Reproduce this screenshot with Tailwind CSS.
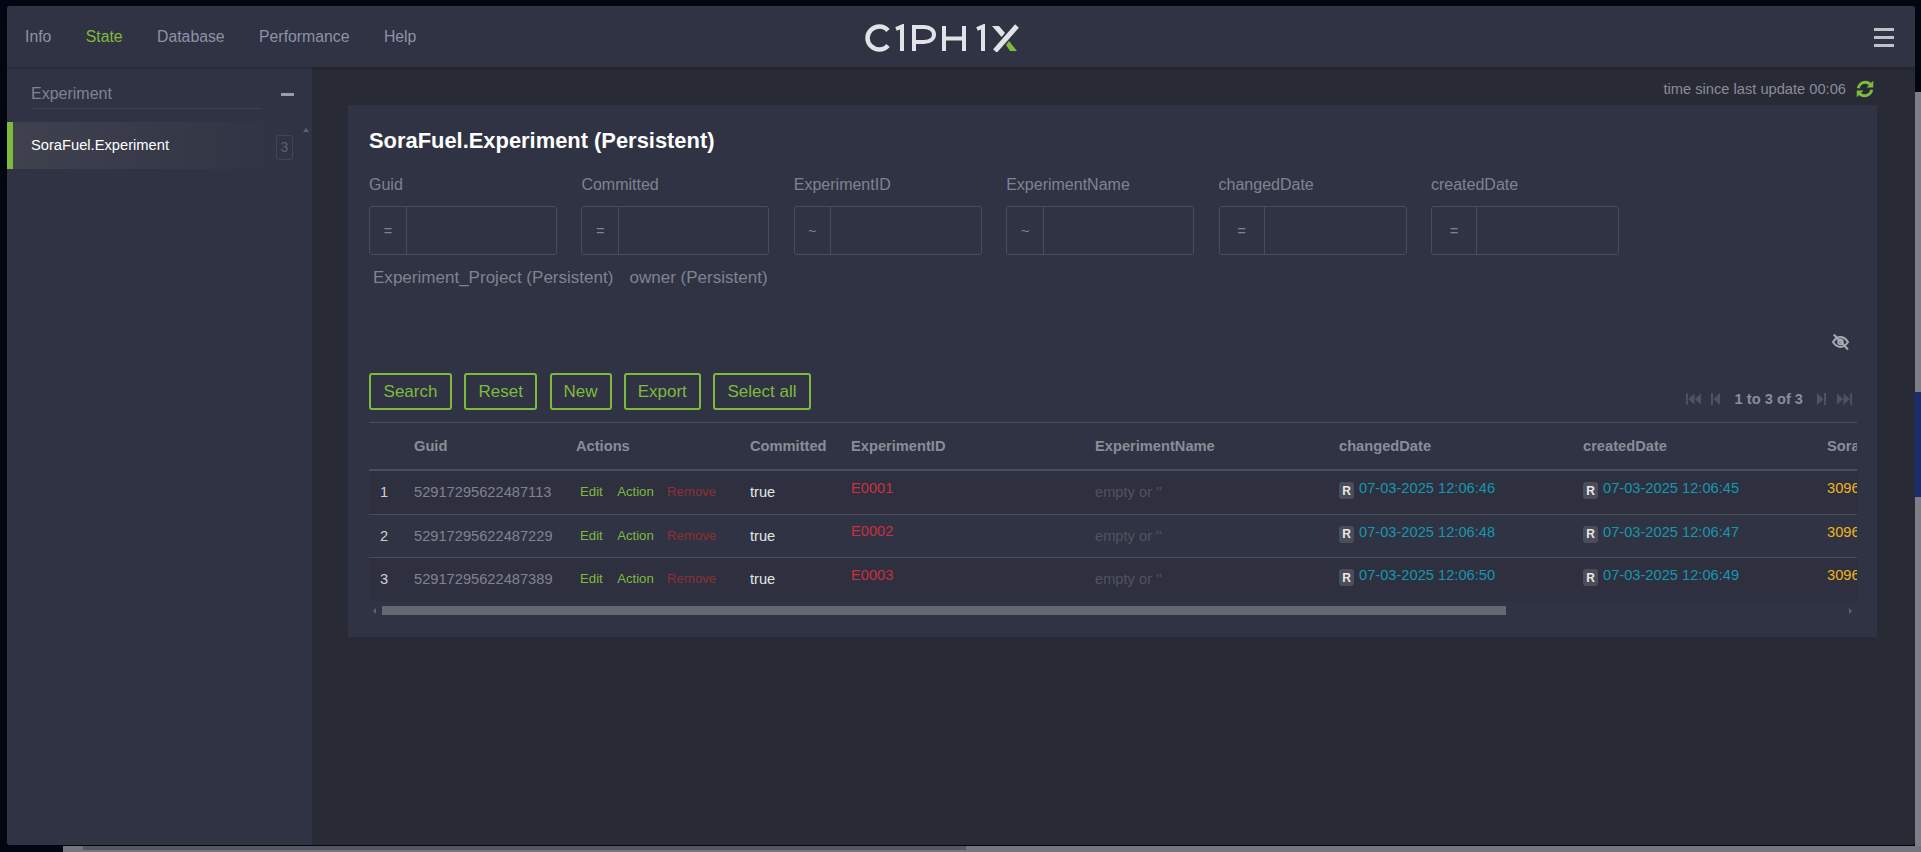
<!DOCTYPE html>
<html lang="en">
  <head>
    <meta charset="UTF-8" />
    <title>Ciphix</title>
    <script src="https://cdn.jsdelivr.net/npm/@tailwindcss/browser@4"></script>
  </head>
  <body class="bg-[#020611] font-['Liberation_Sans',Arial,sans-serif] overflow-hidden">
    <div class="w-[1921px] h-[852px] flex flex-col overflow-hidden">
      <div class="flex flex-1 min-h-0 pt-[6px] pl-[7px]">
        <!-- app window -->
        <div class="w-[1908px] h-[839px] flex flex-col rounded-[3px] overflow-hidden bg-[#282a36]">
          <header class="h-[61px] shrink-0 bg-[#303343] flex items-center relative shadow-[0_1px_3px_rgba(0,0,0,0.25)] z-10">
            <nav class="flex items-center pl-[18px] pt-[1px] gap-[34.4px] text-[15.8px] text-[#8c92a8]">
              <a>Info</a>
              <a class="text-[#7fba3c]">State</a>
              <a>Database</a>
              <a>Performance</a>
              <a>Help</a>
            </nav>
            <!-- logo -->
            <div class="absolute left-[858px] top-[18px] flex items-center">
              <svg width="155" height="28" viewBox="0 0 155 28" fill="none">
                <path d="M23 6.500 C20.500 3.500 17.500 2.500 14.500 2.500 C8 2.500 2.500 7.500 2.500 14 C2.500 20.500 8 25.500 14.500 25.500 C17.500 25.500 20.500 24.500 23 21.500" stroke="#e2e3e6" stroke-width="4.500"/>
                <path d="M31 5 L37 2.500 L37 27" stroke="#e2e3e6" stroke-width="4"/>
                <path d="M49 27 L49 3 L59 3 C65.500 3 69 6.500 69 10.500 C69 14.500 65.500 18 59 18 L49 18" stroke="#e2e3e6" stroke-width="4"/>
                <path d="M79 2 L79 27 M99 2 L99 27 M79 14.500 L99 14.500" stroke="#e2e3e6" stroke-width="4"/>
                <path d="M112 5 L118 2.500 L118 27" stroke="#e2e3e6" stroke-width="4"/>
                <path d="M130 27 L152 2" stroke="#e2e3e6" stroke-width="5"/>
                <path d="M127 2 L134 2 L140 9 L136.500 13 Z" fill="#e2e3e6"/>
                <path d="M144 17 L152 27 L145 27 L141 21 Z" fill="#7fba3c"/>
              </svg>
            </div>
            <div class="absolute right-[21px] top-[22px] w-[20px] flex flex-col gap-[5.5px]">
              <span class="h-[2.5px] bg-[#c0c1c8]"></span>
              <span class="h-[2.5px] bg-[#c0c1c8]"></span>
              <span class="h-[2.5px] bg-[#c0c1c8]"></span>
            </div>
          </header>
          <div class="flex flex-1 min-h-0">
            <aside class="w-[305px] shrink-0 bg-[#303343] relative">
              <div class="h-[41px] mt-[1px] ml-[24px] w-[231px] pb-[2px] border-b border-[#3d4050] flex items-end text-[16px] text-[#7f8391]">Experiment</div>
              <div class="absolute left-[274px] top-[26px] w-[13px] h-[3px] bg-[#9b9ea8]"></div>
              <div class="mt-[13px] h-[47px] w-[280px] flex items-center border-l-[6px] border-[#7fba3c] bg-gradient-to-r from-[#3f414f] to-[#303343]">
                <span class="pl-[18px] text-[14.7px] text-white">SoraFuel.Experiment</span>
              </div>
              <div class="absolute left-[269px] top-[68px] w-[17px] h-[25px] rounded-[3px] border border-[#424554] flex items-center justify-center text-[14px] text-[#5d606d]">3</div>
              <div class="absolute left-[296px] top-[61px] w-0 h-0 border-x-[3px] border-x-transparent border-b-[4px] border-b-[#5f6270]"></div>
            </aside>
            <main class="flex-1 min-w-0 flex flex-col pl-[36px] pr-[38px]">
              <div class="h-[38px] pt-[5px] flex items-center justify-end gap-[10px] pr-[3px] text-[14.67px] text-[#8a8d98]">
                <span>time since last update 00:06</span>
                <svg width="18" height="18" viewBox="0 0 24 24" fill="none" stroke="#7fba3c" stroke-width="4">
                  <path d="M3 11 C4 6 8 3 12.500 3 C16 3 18.500 4.500 20.500 7.500"/>
                  <path d="M23 1 L23 10 L14 10 Z" fill="#7fba3c" stroke="none"/>
                  <path d="M21 13 C20 18 16 21 11.500 21 C8 21 5.500 19.500 3.500 16.500"/>
                  <path d="M1 23 L1 14 L10 14 Z" fill="#7fba3c" stroke="none"/>
                </svg>
              </div>
              <!-- card -->
              <section class="h-[532px] w-[1529px] bg-[#303343] px-[21px] pt-[24px]">
                <h1 class="text-[21.9px] leading-[24px] font-bold text-white">SoraFuel.Experiment (Persistent)</h1>
                <div class="flex gap-[24.4px] mt-[20px]">
                  <label class="w-[188px] text-[16px] text-[#7f8391]">Guid
                    <div class="mt-[9px] h-[49px] flex rounded-[3px] border border-[#494c5b]"><span class="w-[37px] border-r border-[#494c5b] flex items-center justify-center text-[14.67px] text-[#7f8391]">=</span></div>
                  </label>
                  <label class="w-[188px] text-[16px] text-[#7f8391]">Committed
                    <div class="mt-[9px] h-[49px] flex rounded-[3px] border border-[#494c5b]"><span class="w-[37px] border-r border-[#494c5b] flex items-center justify-center text-[14.67px] text-[#7f8391]">=</span></div>
                  </label>
                  <label class="w-[188px] text-[16px] text-[#7f8391]">ExperimentID
                    <div class="mt-[9px] h-[49px] flex rounded-[3px] border border-[#494c5b]"><span class="w-[36px] border-r border-[#494c5b] flex items-center justify-center text-[14.67px] text-[#7f8391]">~</span></div>
                  </label>
                  <label class="w-[188px] text-[16px] text-[#7f8391]">ExperimentName
                    <div class="mt-[9px] h-[49px] flex rounded-[3px] border border-[#494c5b]"><span class="w-[37px] border-r border-[#494c5b] flex items-center justify-center text-[14.67px] text-[#7f8391]">~</span></div>
                  </label>
                  <label class="w-[188px] text-[16px] text-[#7f8391]">changedDate
                    <div class="mt-[9px] h-[49px] flex rounded-[3px] border border-[#494c5b]"><span class="w-[45px] border-r border-[#494c5b] flex items-center justify-center text-[14.67px] text-[#7f8391]">=</span></div>
                  </label>
                  <label class="w-[188px] text-[16px] text-[#7f8391]">createdDate
                    <div class="mt-[9px] h-[49px] flex rounded-[3px] border border-[#494c5b]"><span class="w-[45px] border-r border-[#494c5b] flex items-center justify-center text-[14.67px] text-[#7f8391]">=</span></div>
                  </label>
                </div>
                <div class="flex gap-[16px] pl-[4px] mt-[13px] text-[17.05px] leading-[20px] text-[#7f8391]">
                  <span>Experiment_Project (Persistent)</span>
                  <span>owner (Persistent)</span>
                </div>
                <div class="flex justify-end pr-[6px] mt-[45px] h-[20px]">
                  <svg width="19" height="18" viewBox="0 0 24 24" fill="none" stroke="#a5a8b2" stroke-width="2.800">
                    <path d="M2 12 C5 7.500 8.500 5.500 12 5.500 C15.500 5.500 19 7.500 22 12 C19 16.500 15.500 18.500 12 18.500 C8.500 18.500 5 16.500 2 12 Z"/>
                    <circle cx="12" cy="12" r="3"/>
                    <path d="M3 2 L22 22"/>
                  </svg>
                </div>
                <div class="flex items-start mt-[20px] h-[37px]">
                  <div class="flex gap-[12.25px] text-[17px] text-[#7fba3c]">
                    <button class="h-[37px] w-[83px] border-2 border-[#7fba3c] rounded-[3px]">Search</button>
                    <button class="h-[37px] w-[73px] border-2 border-[#7fba3c] rounded-[3px]">Reset</button>
                    <button class="h-[37px] w-[62px] border-2 border-[#7fba3c] rounded-[3px]">New</button>
                    <button class="h-[37px] w-[77px] border-2 border-[#7fba3c] rounded-[3px]">Export</button>
                    <button class="h-[37px] w-[98px] border-2 border-[#7fba3c] rounded-[3px]">Select all</button>
                  </div>
                  <div class="ml-auto flex items-center h-[37px] pt-[14px] pr-[4px] text-[#50535f]">
                    <svg width="15" height="12" viewBox="0 0 16 12" fill="currentColor"><path d="M0 0h2v12H0z M9 0v12L2.500 6z M16 0v12L9.500 6z"/></svg>
                    <svg class="ml-[10px]" width="9" height="12" viewBox="0 0 9 12" fill="currentColor"><path d="M0 0h2v12H0z M9 0v12L2.500 6z"/></svg>
                    <span class="ml-[15px] mr-[14px] text-[14.67px] font-bold text-[#8a8d98]">1 to 3 of 3</span>
                    <svg width="9" height="12" viewBox="0 0 9 12" fill="currentColor"><path d="M7 0h2v12H7z M0 0v12L6.500 6z"/></svg>
                    <svg class="ml-[11px]" width="15" height="12" viewBox="0 0 16 12" fill="currentColor"><path d="M14 0h2v12h-2z M7 0v12L13.500 6z M0 0v12L6.500 6z"/></svg>
                  </div>
                </div>
                <!-- table -->
                <div class="mt-[12px] w-[1488px] overflow-hidden border-t border-[#4a4d5c]">
                  <table class="w-[1600px] table-fixed text-[14.67px] border-collapse">
                    <colgroup>
                      <col class="w-[45px]" /><col class="w-[162px]" /><col class="w-[174px]" /><col class="w-[101px]" />
                      <col class="w-[244px]" /><col class="w-[244px]" /><col class="w-[244px]" /><col class="w-[244px]" /><col />
                    </colgroup>
                    <thead>
                      <tr class="h-[47px] border-b-2 border-[#4a4d5c] text-left text-[#8a8d98] font-bold">
                        <th></th><th>Guid</th><th>Actions</th><th>Committed</th><th>ExperimentID</th><th>ExperimentName</th><th>changedDate</th><th>createdDate</th><th>SoraFuel</th>
                      </tr>
                    </thead>
                    <tbody>
                      <tr class="h-[44px] border-b border-[#4a4d5c] bg-[#2e3040]">
                        <td class="pl-[11px] text-[#d0d1d6]">1</td>
                        <td class="text-[#7f8391]">52917295622487113</td>
                        <td class="pl-[4px] text-[13.2px]"><span class="text-[#7fba3c]">Edit</span><span class="ml-[14.4px] text-[#7fba3c]">Action</span><span class="ml-[13.3px] text-[#8f2f34]">Remove</span></td>
                        <td class="text-[#e3e4e8]">true</td>
                        <td class="pb-[9px] text-[#c8303f]">E0001</td>
                        <td class="text-[#50535f]">empty or ''</td>
                        <td class="pb-[8px] text-[#1697ad]"><span class="inline-flex items-center justify-center w-[15px] h-[17px] mr-[5px] align-[-1.5px] rounded-[3px] bg-[#4b4d59] text-[12px] font-bold text-[#e8e8ea]">R</span>07-03-2025 12:06:46</td>
                        <td class="pb-[8px] text-[#1697ad]"><span class="inline-flex items-center justify-center w-[15px] h-[17px] mr-[5px] align-[-1.5px] rounded-[3px] bg-[#4b4d59] text-[12px] font-bold text-[#e8e8ea]">R</span>07-03-2025 12:06:45</td>
                        <td class="pb-[8px] text-[#f0b41c]">30964</td>
                      </tr>
                      <tr class="h-[43px] border-b border-[#4a4d5c]">
                        <td class="pl-[11px] text-[#d0d1d6]">2</td>
                        <td class="text-[#7f8391]">52917295622487229</td>
                        <td class="pl-[4px] text-[13.2px]"><span class="text-[#7fba3c]">Edit</span><span class="ml-[14.4px] text-[#7fba3c]">Action</span><span class="ml-[13.3px] text-[#8f2f34]">Remove</span></td>
                        <td class="text-[#e3e4e8]">true</td>
                        <td class="pb-[9px] text-[#c8303f]">E0002</td>
                        <td class="text-[#50535f]">empty or ''</td>
                        <td class="pb-[8px] text-[#1697ad]"><span class="inline-flex items-center justify-center w-[15px] h-[17px] mr-[5px] align-[-1.5px] rounded-[3px] bg-[#4b4d59] text-[12px] font-bold text-[#e8e8ea]">R</span>07-03-2025 12:06:48</td>
                        <td class="pb-[8px] text-[#1697ad]"><span class="inline-flex items-center justify-center w-[15px] h-[17px] mr-[5px] align-[-1.5px] rounded-[3px] bg-[#4b4d59] text-[12px] font-bold text-[#e8e8ea]">R</span>07-03-2025 12:06:47</td>
                        <td class="pb-[8px] text-[#f0b41c]">30964</td>
                      </tr>
                      <tr class="h-[44px] bg-[#2e3040]">
                        <td class="pl-[11px] text-[#d0d1d6]">3</td>
                        <td class="text-[#7f8391]">52917295622487389</td>
                        <td class="pl-[4px] text-[13.2px]"><span class="text-[#7fba3c]">Edit</span><span class="ml-[14.4px] text-[#7fba3c]">Action</span><span class="ml-[13.3px] text-[#8f2f34]">Remove</span></td>
                        <td class="text-[#e3e4e8]">true</td>
                        <td class="pb-[9px] text-[#c8303f]">E0003</td>
                        <td class="text-[#50535f]">empty or ''</td>
                        <td class="pb-[8px] text-[#1697ad]"><span class="inline-flex items-center justify-center w-[15px] h-[17px] mr-[5px] align-[-1.5px] rounded-[3px] bg-[#4b4d59] text-[12px] font-bold text-[#e8e8ea]">R</span>07-03-2025 12:06:50</td>
                        <td class="pb-[8px] text-[#1697ad]"><span class="inline-flex items-center justify-center w-[15px] h-[17px] mr-[5px] align-[-1.5px] rounded-[3px] bg-[#4b4d59] text-[12px] font-bold text-[#e8e8ea]">R</span>07-03-2025 12:06:49</td>
                        <td class="pb-[8px] text-[#f0b41c]">30964</td>
                      </tr>
                    </tbody>
                  </table>
                </div>
                <!-- horizontal scrollbar -->
                <div class="mt-[5px] h-[9px] w-[1488px] flex items-center">
                  <span class="ml-[4px] w-0 h-0 border-y-[3px] border-y-transparent border-r-[3px] border-r-[#5f6270]"></span>
                  <span class="ml-[6px] w-[1124px] h-[9px] bg-[#646774]"></span>
                  <span class="ml-auto mr-[5px] w-0 h-0 border-y-[3px] border-y-transparent border-l-[3px] border-l-[#5f6270]"></span>
                </div>
              </section>
            </main>
          </div>
        </div>
        <!-- page scrollbar behind the window -->
        <div class="w-[6px] h-[846px] mt-[-6px] pt-[92px] flex flex-col">
          <div class="h-[300px] bg-[#7d7f86]"></div>
          <div class="h-[105px] bg-[#1a2c6e]"></div>
          <div class="flex-1 bg-[#7d7f86]"></div>
        </div>
      </div>
      <div class="h-[6px] ml-[63px] bg-[#74767e] flex">
        <span class="ml-[20px] w-[883px] h-[4px] bg-[#55575f]"></span>
      </div>
    </div>
  </body>
</html>
